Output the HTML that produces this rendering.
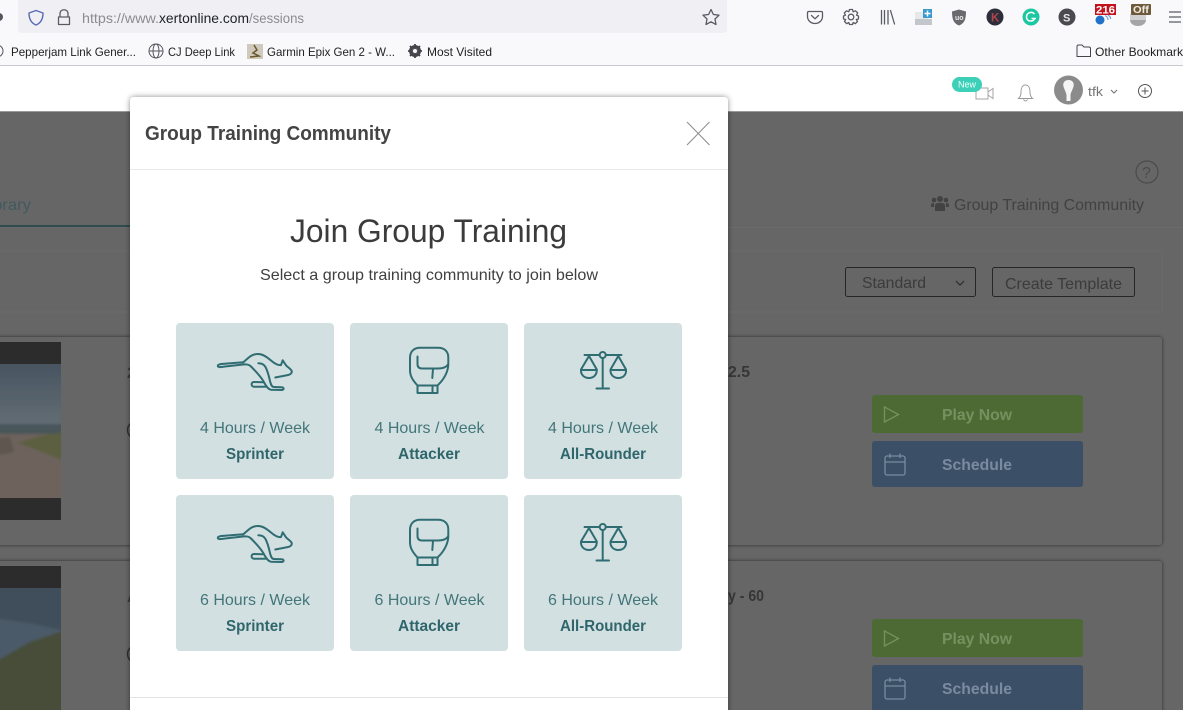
<!DOCTYPE html>
<html lang="en"><head><meta charset="utf-8"><title>Group Training Community</title>
<style>
html,body{margin:0;padding:0;width:1183px;height:710px;overflow:hidden;background:#fff}
svg{display:block}
text{font-family:"Liberation Sans",sans-serif;white-space:pre}
.bm{font-size:12px;fill:#1f1f1f}
.wk{font-size:16px;fill:#427679}
.nm{font-size:16px;font-weight:bold;fill:#2f666b}
.ic{fill:none;stroke:#2f6d72;stroke-width:2;stroke-linecap:round;stroke-linejoin:round}
.tb{fill:none;stroke:#5b5b66;stroke-width:1.3;stroke-linecap:round;stroke-linejoin:round}
</style></head><body>
<svg width="1183" height="710" viewBox="0 0 1183 710" xmlns="http://www.w3.org/2000/svg">
<defs>
<filter id="sh" x="-10%" y="-10%" width="120%" height="120%"><feDropShadow dx="0" dy="0" stdDeviation="3" flood-color="#000" flood-opacity=".45"/></filter>
<filter id="cs" x="-5%" y="-10%" width="110%" height="120%"><feDropShadow dx="0" dy="0" stdDeviation="1.8" flood-color="#000" flood-opacity=".6"/></filter>
<filter id="bl" x="-10%" y="-10%" width="120%" height="120%"><feGaussianBlur stdDeviation="1.4"/></filter>
<linearGradient id="sky" x1="0" y1="0" x2="0" y2="1"><stop offset="0" stop-color="#46535f"/><stop offset="1" stop-color="#626c73"/></linearGradient>
<clipPath id="p1"><rect x="0" y="364" width="61" height="134"/></clipPath>
<clipPath id="p2"><rect x="0" y="588" width="61" height="122"/></clipPath>
<g id="roo" class="ic">
<path d="M243.300 362.300C248 358.500 251 354 258 354C263 354 267 357 271 360.500C274.500 363.500 278.500 365.500 281 365L282.700 360.300L286 365.300C288 367.500 291 369 291.700 371C292.200 373 290.500 374.500 288 375C284 376 279 376.500 275.300 377.500"/>
<path d="M243.300 362.300L226 363.600C222 364 218 364 217.800 365.800C217.700 367.500 220 367.200 224 366.600L243 364.500C247 364 249 364.500 251 366.500C255 370.500 260 376 263 380.500C265 384 267.500 389.500 271 389.700L281.500 390C284.300 390 284.300 387.200 281.500 387.200L274 387C271.500 387 270.800 384 270 381C269 376.500 267.800 371.500 265.500 367C264 364.500 261 363.300 258.300 363.300"/>
<path d="M263.300 382.300L254 382C250.800 382 250.800 386.700 254 386.700L265.500 386.700"/>
</g>
<g id="glove" class="ic">
<path d="M417.500 385.500C412.500 380 410 376 410 370L410 358C410 351.500 414 347.800 420 347.800L438 347.800C444.500 347.800 448.300 351.500 448.300 357.500L448.300 364C448.300 372 443.500 380 437.500 385.500Z"/>
<path d="M417.500 356.500L417.500 364C417.500 367 419 368.500 422 368.500L438 368.500C443 368.500 446.500 367 448 364.500"/>
<path d="M433 369L432.300 378"/>
<path d="M417.500 385.500L417.500 393L437.500 393L437.500 385.500M432.500 387L432.500 392.500"/>
</g>
<g id="scale" class="ic">
<circle cx="602.700" cy="355" r="3"/>
<path d="M584.500 355L599.700 355M605.700 355L621.500 355M602.700 358L602.700 388.500M596.500 388.500L609 388.500"/>
<path d="M589 356L581 369.500C580.500 375 584.500 378 589 378C593.500 378 597 375 596.800 369.500L589 356ZM581 370L596.800 370"/>
<path d="M618.300 356L610.500 369.500C610 375 614 378 618.300 378C623 378 626.500 375 626 369.500L618.300 356ZM610.500 370L626 370"/>
</g>
<g id="play"><path d="M884.500 407L898.500 414.500L884.500 422Z" fill="none" stroke="#76905f" stroke-width="1.300"/></g>
<g id="cal" fill="none" stroke="#7a8ba0" stroke-width="1.300"><rect x="885" y="456" width="20" height="19" rx="2"/><path d="M885 462L905 462M890 453.500L890 458M900 453.500L900 458"/></g>
</defs>

<!-- browser chrome -->
<rect width="1183" height="66" fill="#f9f9fb"/>
<rect x="0" y="65" width="1183" height="1" fill="#c9c9cd"/>
<path d="M18 0L727 0L727 29Q727 33 723 33L22 33Q18 33 18 29Z" fill="#f0f0f4"/>
<circle cx="-1" cy="17" r="4" fill="#55555f"/>
<path d="M36 10.500L43 13C43 19 41 23 36 25C31 23 29 19 29 13Z" fill="none" stroke="#5a6bb5" stroke-width="1.400" stroke-linejoin="round"/>
<path d="M60 17L60 13.500C60 8.500 68 8.500 68 13.500L68 17M58.500 17L69.500 17L69.500 24.500L58.500 24.500Z" class="tb"/>
<text x="82" y="23" font-size="14" fill="#8b8b93" textLength="77" lengthAdjust="spacingAndGlyphs">https://www.</text>
<text x="159" y="23" font-size="14" fill="#20202a" textLength="90" lengthAdjust="spacingAndGlyphs">xertonline.com</text>
<text x="249" y="23" font-size="14" fill="#8b8b93" textLength="55" lengthAdjust="spacingAndGlyphs">/sessions</text>
<path d="M711 9.500L713.400 14.500L719 15.200L715 19L716 24.500L711 21.800L706 24.500L707 19L703 15.200L708.600 14.500Z" class="tb"/>
<path d="M808.500 11.500L821.500 11.500Q822.500 11.500 822.500 13L822.500 16.500C822.500 20.500 819 23.500 815 23.500C811 23.500 807.500 20.500 807.500 16.500L807.500 13Q807.500 11.500 808.500 11.500ZM811.500 15.500L815 18.800L818.500 15.500" class="tb"/>
<circle cx="851" cy="17" r="2.800" class="tb"/>
<path d="M849.500 9.500L852.500 9.500L853.200 11.800L855.500 10.800L857.700 13L856.500 15.200L858.500 16L858.500 19L856.300 19.500L857.500 21.500L855.300 23.700L853.200 22.500L852.500 24.500L849.500 24.500L848.800 22.500L846.700 23.700L844.500 21.500L845.700 19.500L843.500 19L843.500 16L845.500 15.200L844.300 13L846.500 10.800L848.800 11.800Z" class="tb"/>
<path d="M881.500 10.500L881.500 24M884.500 10.500L884.500 24M888 10.500L888 24M890.500 10.500L894.500 24" class="tb"/>
<rect x="915" y="19" width="17" height="6" fill="#c3c6cb"/><rect x="915" y="12" width="13" height="7" fill="#e6e8ea"/><rect x="923" y="9" width="9" height="9" fill="#3a9ad0"/>
<path d="M927.500 10.500L927.500 16.500M924.500 13.500L930.500 13.500" stroke="#fff" stroke-width="1.500"/>
<path d="M959 9.500L966 11.500C966 19 964.500 23.500 959 25.500C953.500 23.500 952 19 952 11.500Z" fill="#6a6a6e"/>
<text x="955" y="20" font-size="7" font-weight="bold" fill="#e8e8e8">uo</text>
<circle cx="995" cy="17" r="8.500" fill="#2c2f3a"/><text x="991" y="21.500" font-size="11.500" font-weight="bold" fill="#b3434b">K</text>
<circle cx="1031" cy="17" r="8.500" fill="#1cc8a0"/><path d="M1034.500 14C1032 11 1026.500 12.500 1026.500 17C1026.500 21.500 1032.500 22.500 1035 18.500L1031.500 18.500" fill="none" stroke="#fff" stroke-width="1.500"/>
<circle cx="1067" cy="17" r="8.500" fill="#4a4a50"/><text x="1063" y="21.500" font-size="11" font-weight="bold" fill="#e6e6e6">S</text>
<rect x="1095" y="4" width="21" height="11" fill="#c4121c"/><text x="1096" y="13.500" font-size="11" font-weight="bold" fill="#fff" textLength="19" lengthAdjust="spacingAndGlyphs">216</text>
<circle cx="1100" cy="20" r="4.500" fill="#2171c9"/><path d="M1105 15.500Q1108 17 1108 20M1108 15Q1111 17 1110.500 19" stroke="#6fa4d8" fill="none" stroke-width="1.200"/>
<ellipse cx="1138" cy="20" rx="8" ry="6" fill="#a5a5a8"/><rect x="1130" y="14" width="16" height="6" fill="#d0d0d2"/>
<rect x="1131" y="4" width="20" height="11" rx="1" fill="#6d5a3c"/><text x="1133" y="13" font-size="10.500" font-weight="bold" fill="#f1ece1" textLength="16" lengthAdjust="spacingAndGlyphs">Off</text>
<path d="M1169 12L1181 12M1169 17L1181 17M1169 22L1181 22" stroke="#5b5b66" stroke-width="1.200"/>

<!-- bookmarks -->
<g fill="none" stroke="#55555f" stroke-width="1"><circle cx="-3" cy="51" r="6"/><circle cx="156" cy="51" r="7"/><ellipse cx="156" cy="51" rx="3" ry="7"/><path d="M149 51L163 51"/></g>
<text class="bm" x="11" y="56" textLength="125" lengthAdjust="spacingAndGlyphs">Pepperjam Link Gener...</text>
<text class="bm" x="168" y="56" textLength="67" lengthAdjust="spacingAndGlyphs">CJ Deep Link</text>
<rect x="247" y="44" width="16" height="15" fill="#cfcabd"/><path d="M254 45L257 50L253 53L259 56L250 57" stroke="#6b5a2a" stroke-width="1.500" fill="none"/>
<text class="bm" x="267" y="56" textLength="128" lengthAdjust="spacingAndGlyphs">Garmin Epix Gen 2 - W...</text>
<circle cx="415" cy="51" r="4.500" fill="none" stroke="#45454c" stroke-width="3"/><path d="M415 44L415 58M408 51L422 51M410 46L420 56M420 46L410 56" stroke="#45454c" stroke-width="1.800"/><circle cx="415" cy="51" r="2" fill="#f9f9fb"/>
<text class="bm" x="427" y="56" textLength="65" lengthAdjust="spacingAndGlyphs">Most Visited</text>
<path d="M1077 46.500Q1077 45 1078.500 45L1082 45L1084 47L1089 47Q1090.500 47 1090.500 48.500L1090.500 56.500L1077 56.500Z" fill="none" stroke="#45454c"/>
<text class="bm" x="1095" y="56" textLength="88" lengthAdjust="spacingAndGlyphs">Other Bookmark</text>

<!-- white app header -->
<rect y="66" width="1183" height="46" fill="#fff"/>
<path d="M976 88L988 88L988 99L976 99ZM988 92L993 88.500L993 98.500L988 95" fill="none" stroke="#a6a6a6" stroke-width="1"/>
<rect x="952" y="77" width="30" height="15" rx="7.500" fill="#3dd0b8"/>
<text x="958" y="87.500" font-size="9.500" fill="#f3fffc" textLength="18" lengthAdjust="spacingAndGlyphs">New</text>
<path d="M1018.500 98.500Q1021 96.500 1021 92C1021 88 1022.500 85 1025.500 85C1028.500 85 1030 88 1030 92Q1030 96.500 1032.500 98.500ZM1023.500 99.500Q1025.500 102.500 1027.500 99.500" fill="none" stroke="#9a9a9a"/>
<circle cx="1068.500" cy="90" r="14.500" fill="#8b8b8b"/>
<path d="M1068.500 80C1072.500 80 1074.500 83 1073.500 86.500C1072.500 90 1071 92 1070.500 95L1070.500 101L1066.500 101L1066.500 95C1066 92 1064.500 90 1063.500 86.500C1062.500 83 1064.500 80 1068.500 80Z" fill="#f5f5f5"/>
<text x="1088" y="96" font-size="13" fill="#747474" textLength="15" lengthAdjust="spacingAndGlyphs">tfk</text>
<path d="M1111 90L1114 93L1117 90" fill="none" stroke="#707070"/>
<circle cx="1145" cy="91" r="6.500" fill="none" stroke="#555" stroke-width="1"/><path d="M1145 87.500L1145 94.500M1141.500 91L1148.500 91" stroke="#555"/>

<!-- dimmed page -->
<rect y="112" width="1183" height="598" fill="#666"/>
<rect y="111" width="1183" height="1" fill="#9a9a9a"/>
<text x="-20" y="210" font-size="16" fill="#425a5d" textLength="51" lengthAdjust="spacingAndGlyphs">Library</text>
<rect y="225" width="130" height="2" fill="#2f4b4e"/>
<rect y="227" width="1183" height="1" fill="#6a6a6a"/>
<circle cx="1147" cy="172" r="11" fill="none" stroke="#4b4b4b" stroke-width="1.200"/>
<text x="1142" y="178" font-size="16" fill="#4b4b4b">?</text>
<g fill="#424242"><circle cx="940" cy="199" r="3"/><circle cx="934" cy="200" r="2.300"/><circle cx="946" cy="200" r="2.300"/><path d="M935 211L935 206Q935 203 938 203L942 203Q945 203 945 206L945 211Z"/><path d="M931 207L931 205Q931 203 934 203L934 207ZM949 207L949 205Q949 203 946 203L946 207Z"/></g>
<text x="954" y="210" font-size="16" fill="#424242" textLength="190" lengthAdjust="spacingAndGlyphs">Group Training Community</text>
<rect x="-2" y="251" width="1164" height="61" fill="none" stroke="#6b6b6b"/>
<rect x="845.500" y="267.500" width="130" height="29" rx="2" fill="none" stroke="#262626"/>
<text x="862" y="288" font-size="16" fill="#3b3b3b" textLength="64" lengthAdjust="spacingAndGlyphs">Standard</text>
<path d="M956 281L960 285L964 281" fill="none" stroke="#2a2a2a" stroke-width="1.200"/>
<rect x="992.500" y="267.500" width="142" height="29" rx="2" fill="none" stroke="#262626"/>
<text x="1005" y="289" font-size="16" fill="#3b3b3b" textLength="117" lengthAdjust="spacingAndGlyphs">Create Template</text>

<rect x="-5" y="337" width="1167" height="208" rx="3" fill="#666" filter="url(#cs)"/>
<rect x="-5" y="561" width="1167" height="170" rx="3" fill="#666" filter="url(#cs)"/>

<rect x="0" y="342" width="61" height="178" fill="#2c2c2c"/>
<g clip-path="url(#p1)"><g filter="url(#bl)"><rect x="-5" y="360" width="71" height="64" fill="url(#sky)"/><rect x="-5" y="424" width="71" height="11" fill="#4a575a"/><rect x="-5" y="434" width="71" height="70" fill="#6d625b"/><path d="M17 443L40 436L66 432L66 462L35 449Z" fill="#5c6040"/><path d="M-5 438L10 437L14 452L-5 456Z" fill="#5e5650"/></g></g>
<rect x="0" y="566" width="61" height="144" fill="#2c2c2c"/>
<g clip-path="url(#p2)"><g filter="url(#bl)"><rect x="-5" y="584" width="71" height="70" fill="#414e5a"/><path d="M-5 618L35 624L66 631L66 640L-5 665Z" fill="#4c5a67"/><path d="M-5 662L30 642L66 630L66 715L-5 715Z" fill="#474d39"/></g></g>

<text x="127" y="378" font-size="16" font-weight="bold" fill="#3a3a3a">2</text>
<text x="127" y="602" font-size="16" font-weight="bold" fill="#3a3a3a">A</text>
<circle cx="136" cy="430" r="8.500" fill="none" stroke="#2f2f2f" stroke-width="1.500"/>
<circle cx="136" cy="654" r="8.500" fill="none" stroke="#2f2f2f" stroke-width="1.500"/>

<text x="728" y="377" font-size="16" font-weight="bold" fill="#363636" textLength="22" lengthAdjust="spacingAndGlyphs">2.5</text>
<text x="728" y="601" font-size="16" font-weight="bold" fill="#363636" textLength="36" lengthAdjust="spacingAndGlyphs">y - 60</text>

<rect x="872" y="395" width="211" height="38" rx="3" fill="#4d6a34"/>
<text x="942" y="420" font-size="16" font-weight="bold" fill="#76905f" textLength="70" lengthAdjust="spacingAndGlyphs">Play Now</text>
<use href="#play"/>
<rect x="872" y="441" width="211" height="46" rx="3" fill="#3b4f67"/>
<text x="942" y="470" font-size="16" font-weight="bold" fill="#7a8ba0" textLength="70" lengthAdjust="spacingAndGlyphs">Schedule</text>
<use href="#cal"/>
<rect x="872" y="619" width="211" height="38" rx="3" fill="#4d6a34"/>
<text x="942" y="644" font-size="16" font-weight="bold" fill="#76905f" textLength="70" lengthAdjust="spacingAndGlyphs">Play Now</text>
<use href="#play" y="224"/>
<rect x="872" y="665" width="211" height="50" rx="3" fill="#3b4f67"/>
<text x="942" y="694" font-size="16" font-weight="bold" fill="#7a8ba0" textLength="70" lengthAdjust="spacingAndGlyphs">Schedule</text>
<use href="#cal" y="224"/>

<!-- modal -->
<rect x="130" y="97" width="598" height="640" rx="4" fill="#fff" filter="url(#sh)"/>
<text x="145" y="140" font-size="20" font-weight="bold" fill="#444" textLength="246" lengthAdjust="spacingAndGlyphs">Group Training Community</text>
<path d="M687 122L709.500 145M709.500 122L687 145" stroke="#8a8a8a" stroke-width="1" fill="none"/>
<rect x="130" y="169" width="598" height="1" fill="#e9e9e9"/>
<text x="290" y="242" font-size="32" fill="#3b3b3b" textLength="277" lengthAdjust="spacingAndGlyphs">Join Group Training</text>
<text x="260" y="280" font-size="16" fill="#404040" textLength="338" lengthAdjust="spacingAndGlyphs">Select a group training community to join below</text>
<rect x="130" y="697" width="598" height="1" fill="#e4e4e4"/>

<g fill="#d3e0e2">
<rect x="176" y="323" width="158" height="156" rx="4"/><rect x="350" y="323" width="158" height="156" rx="4"/><rect x="524" y="323" width="158" height="156" rx="4"/>
<rect x="176" y="495" width="158" height="156" rx="4"/><rect x="350" y="495" width="158" height="156" rx="4"/><rect x="524" y="495" width="158" height="156" rx="4"/>
</g>
<use href="#roo"/><use href="#glove"/><use href="#scale"/>
<use href="#roo" y="172"/><use href="#glove" y="172"/><use href="#scale" y="172"/>

<text class="wk" x="200" y="433" textLength="110" lengthAdjust="spacingAndGlyphs">4 Hours / Week</text>
<text class="wk" x="374.500" y="433" textLength="110" lengthAdjust="spacingAndGlyphs">4 Hours / Week</text>
<text class="wk" x="548" y="433" textLength="110" lengthAdjust="spacingAndGlyphs">4 Hours / Week</text>
<text class="nm" x="226" y="459" textLength="58" lengthAdjust="spacingAndGlyphs">Sprinter</text>
<text class="nm" x="398" y="459" textLength="62" lengthAdjust="spacingAndGlyphs">Attacker</text>
<text class="nm" x="560" y="459" textLength="86" lengthAdjust="spacingAndGlyphs">All-Rounder</text>
<text class="wk" x="200" y="605" textLength="110" lengthAdjust="spacingAndGlyphs">6 Hours / Week</text>
<text class="wk" x="374.500" y="605" textLength="110" lengthAdjust="spacingAndGlyphs">6 Hours / Week</text>
<text class="wk" x="548" y="605" textLength="110" lengthAdjust="spacingAndGlyphs">6 Hours / Week</text>
<text class="nm" x="226" y="631" textLength="58" lengthAdjust="spacingAndGlyphs">Sprinter</text>
<text class="nm" x="398" y="631" textLength="62" lengthAdjust="spacingAndGlyphs">Attacker</text>
<text class="nm" x="560" y="631" textLength="86" lengthAdjust="spacingAndGlyphs">All-Rounder</text>
</svg>
</body></html>
